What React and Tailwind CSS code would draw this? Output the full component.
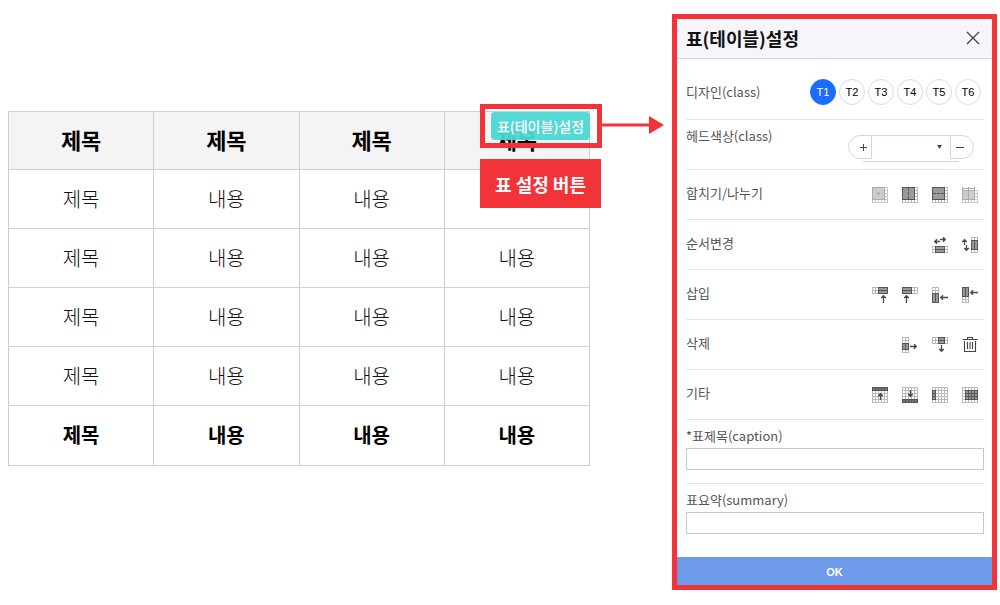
import { useState } from 'react'

const designs = ['T1', 'T2', 'T3', 'T4', 'T5', 'T6']

const rows = [
  ['제목', '내용', '내용', ''],
  ['제목', '내용', '내용', '내용'],
  ['제목', '내용', '내용', '내용'],
  ['제목', '내용', '내용', '내용'],
]

// Cells are 3px apart, lines sit on the pixel grid
function Cells({ x = 0, y = 0, w = 15, h = 15, color = '#b9b9b9' }) {
  let d = ''
  for (let i = x; i <= x + w; i += 3) d += `M${i + 0.5} ${y}v${h + 1}`
  for (let j = y; j <= y + h; j += 3) d += `M${x} ${j + 0.5}h${w + 1}`
  return <path d={d} stroke={color} />
}

function Block({ x = 0, y = 0, w, h, line, fill = '#9a9a9a', stroke = '#555', dash }) {
  return (
    <>
      <rect x={x + 0.5} y={y + 0.5} width={w} height={h} fill={fill} stroke={stroke} />
      {line && <path d={line} stroke={stroke} strokeDasharray={dash} />}
    </>
  )
}

// dir is the way the arrow points, x/y is its tip
function Arrow({ dir, x, y, len = 8 }) {
  const turn = { up: 0, right: 90, down: 180, left: 270 }[dir]
  return (
    <path
      transform={`translate(${x + 0.5} ${y + 0.5}) rotate(${turn})`}
      d={`M0 0V${len - 0.5}M-2.3 2.5L0 0.2L2.3 2.5M-1 1.8h2`}
      stroke="#4a4a4a"
      strokeWidth="1.3"
      shapeRendering="auto"
    />
  )
}

const icons = {
  merge: (
    <>
      <Cells color="#c9c9c9" />
      <Block w={12} h={12} fill="#ccc" stroke="#aaa" line="M5 6.5h3M6.5 5v3" />
    </>
  ),
  splitCol: (
    <>
      <Cells />
      <Block w={12} h={12} line="M6.5 1v12" dash="3 1" />
    </>
  ),
  splitRow: (
    <>
      <Cells />
      <Block w={12} h={12} line="M1 6.5h12" dash="3 1" />
    </>
  ),
  splitAll: (
    <>
      <Cells y={3} h={12} color="#c9c9c9" />
      <Block y={3} w={12} h={9} fill="#ccc" stroke="#aaa" line="M6.5 0v12M0.5 0v3M12.5 0v3M0 1.5h13" />
    </>
  ),
  moveRow: (
    <>
      <Cells y={9} h={6} />
      <Block x={3} y={9} w={9} h={6} line="M3 12.5h10" />
      <Arrow dir="right" x={13} y={2} len={6} />
      <Arrow dir="left" x={2} y={4} len={6} />
    </>
  ),
  moveCol: (
    <>
      <Cells x={9} w={6} />
      <Block x={9} y={3} w={6} h={9} line="M12.5 3v10" />
      <Arrow dir="up" x={2} y={2} len={6} />
      <Arrow dir="down" x={4} y={13} len={6} />
    </>
  ),
  insertLeft: (
    <>
      <Cells h={6} />
      <Block x={6} w={9} h={6} line="M6 3.5h10" />
      <Arrow dir="up" x={11} y={8} />
    </>
  ),
  insertRight: (
    <>
      <Cells h={6} />
      <Block w={9} h={6} line="M0 3.5h10" />
      <Arrow dir="up" x={4} y={8} />
    </>
  ),
  insertAbove: (
    <>
      <Cells w={6} />
      <Block y={6} w={6} h={9} line="M3.5 6v10" />
      <Arrow dir="left" x={8} y={10} />
    </>
  ),
  insertBelow: (
    <>
      <Cells w={6} />
      <Block w={6} h={9} line="M3.5 0v10" />
      <Arrow dir="left" x={8} y={5} />
    </>
  ),
  deleteRow: (
    <>
      <Cells w={6} />
      <Block y={6} w={6} h={6} line="M3.5 6v7" />
      <Arrow dir="right" x={14} y={9} len={7} />
    </>
  ),
  deleteCol: (
    <>
      <Cells h={6} />
      <Block x={6} w={6} h={6} line="M6 3.5h7" />
      <Arrow dir="down" x={9} y={14} len={7} />
    </>
  ),
  trash: (
    <path
      d="M0.5 2.5h15M5.5 2V0.5h5V2M2.5 4v10.5h11V4M5.5 5v7M8 5v7M10.5 5v7"
      stroke="#444"
      strokeWidth="1.1"
      shapeRendering="auto"
    />
  ),
  headTop: (
    <>
      <Cells />
      <Block w={15} h={3} fill="#777" line="M3.5 0v4M6.5 0v4M9.5 0v4M12.5 0v4" />
      <Arrow dir="up" x={8} y={6} len={7} />
    </>
  ),
  headBottom: (
    <>
      <Cells />
      <Block y={12} w={15} h={3} fill="#777" line="M3.5 12v4M6.5 12v4M9.5 12v4M12.5 12v4" />
      <Arrow dir="down" x={8} y={9} len={7} />
    </>
  ),
  headLeft: (
    <>
      <Cells />
      <Block y={3} w={3} h={9} line="M0 6.5h4M0 9.5h4" />
    </>
  ),
  bodyCells: (
    <>
      <Cells />
      <Block x={3} y={3} w={12} h={9} line="M6.5 3v10M9.5 3v10M12.5 3v10M3 6.5h13M3 9.5h13" />
    </>
  ),
}

const tools = [
  { label: '합치기/나누기', items: ['merge', 'splitCol', 'splitRow', 'splitAll'] },
  { label: '순서변경', items: ['moveRow', 'moveCol'] },
  { label: '삽입', items: ['insertLeft', 'insertRight', 'insertAbove', 'insertBelow'] },
  { label: '삭제', items: ['deleteRow', 'deleteCol', 'trash'] },
  { label: '기타', items: ['headTop', 'headBottom', 'headLeft', 'bodyCells'] },
]

function ToolIcon({ name }) {
  return (
    <button type="button" className="block h-4 w-4">
      <svg viewBox="0 0 16 16" className="h-4 w-4" fill="none" shapeRendering="crispEdges">
        {icons[name]}
      </svg>
    </button>
  )
}

function TextField({ id, label }) {
  return (
    <div className="h-16 border-b border-[#dbe6ee] pt-2 last:border-b-0">
      <label htmlFor={id} className="block h-5 leading-4">{label}</label>
      <input id={id} type="text" className="block h-[22px] w-full border border-[#c8c8c8] bg-white px-2 outline-none" />
    </div>
  )
}

function ContentTable() {
  return (
    <table className="w-full table-fixed border-collapse text-center text-xl text-[#111]">
      <thead>
        <tr className="h-[58px] bg-[#f4f4f4] text-[22px] text-black">
          {[0, 1, 2, 3].map((i) => (
            <th key={i} className="border border-[#cfcfcf] pb-1 font-bold leading-7">제목</th>
          ))}
        </tr>
      </thead>
      <tbody>
        {rows.map((row, r) => (
          <tr key={r} className="h-[59px]">
            {row.map((cell, c) => (
              <td key={c} className="border border-[#cfcfcf] font-light leading-7">{cell}</td>
            ))}
          </tr>
        ))}
      </tbody>
      <tfoot>
        <tr className="h-[60px] text-black">
          {['제목', '내용', '내용', '내용'].map((cell, c) => (
            <td key={c} className="border border-[#cfcfcf] pb-0.5 font-bold leading-7">{cell}</td>
          ))}
        </tr>
      </tfoot>
    </table>
  )
}

function SettingsPanel() {
  const [design, setDesign] = useState('T1')

  return (
    <section className="w-[325px] shrink-0 border-5 border-[#f23338] bg-white text-[13px] text-[#555]">
      {/* Title bar */}
      <header className="flex h-10 items-center justify-between border-b border-[#cbd8e0] bg-[#f5f5fb] pr-3 pb-0.5 pl-[9px]">
        <h2 className="text-lg font-bold leading-6 text-[#111]">표(테이블)설정</h2>
        <button type="button" aria-label="닫기" className="block">
          <svg viewBox="0 0 14 14" className="h-3.5 w-3.5" fill="none" stroke="#444" strokeWidth="1.3">
            <path d="M1 1l12 12M13 1L1 13" />
          </svg>
        </button>
      </header>

      <div className="pt-[11px] pr-2 pb-[9px] pl-[9px]">
        <div className="flex h-[50px] items-center justify-between border-b border-[#dbe6ee] pr-[3px] pb-[5px]">
          <span>디자인(class)</span>
          <div className="flex gap-[3px] font-['Liberation_Sans',sans-serif] text-[11px]">
            {designs.map((d) => (
              <button
                key={d}
                type="button"
                onClick={() => setDesign(d)}
                className={`h-[26px] w-[26px] rounded-full border ${
                  d === design ? 'border-[#1a6dff] bg-[#1a6dff] text-white' : 'border-[#d3dde8] bg-white text-black'
                }`}
              >
                {d}
              </button>
            ))}
          </div>
        </div>

        <div className="flex h-[50px] items-start justify-between border-b border-[#dbe6ee] pr-2.5">
          <label htmlFor="head-color" className="pt-2 leading-4">헤드색상(class)</label>
          <div className="flex flex-col items-center pt-[15px]">
            <div className="flex h-6">
              <button type="button" className="flex w-6 items-center justify-center rounded-l-full border border-[#cbd8e6] pl-1.5">
                <svg viewBox="0 0 7 7" className="h-[7px] w-[7px]" stroke="#444" shapeRendering="crispEdges">
                  <path d="M0 3.5h7M3.5 0v7" />
                </svg>
              </button>
              <div className="relative">
                <select id="head-color" className="block h-6 w-[78px] appearance-none bg-white border-t border-[#cbd8e6] outline-none">
                  <option></option>
                </select>
                <svg viewBox="0 0 5 4" className="pointer-events-none absolute top-2.5 right-2 h-1 w-[5px]" fill="#444">
                  <path d="M0 0h5L2.5 4z" />
                </svg>
              </div>
              <button type="button" className="flex w-6 items-center justify-center rounded-r-full border border-[#cbd8e6] pr-1">
                <svg viewBox="0 0 8 8" className="h-2 w-2" stroke="#444" shapeRendering="crispEdges">
                  <path d="M0 4.5h8" />
                </svg>
              </button>
            </div>
            <div className="mt-0.5 h-px w-24 bg-[#cbd8e6]" />
          </div>
        </div>

        {tools.map((tool) => (
          <div key={tool.label} className="flex h-[50px] items-center justify-between border-b border-[#dbe6ee] pr-1.5">
            <span className="pb-1 leading-5">{tool.label}</span>
            <div className="flex gap-3.5">
              {tool.items.map((name) => (
                <ToolIcon key={name} name={name} />
              ))}
            </div>
          </div>
        ))}

        <TextField id="caption" label="*표제목(caption)" />
        <TextField id="summary" label="표요약(summary)" />
      </div>

      <button type="button" className="block h-7 w-full bg-[#6d9bea] pt-0.5 font-['Liberation_Sans',sans-serif] text-[11px] font-bold text-white">
        OK
      </button>
    </section>
  )
}

export default function App() {
  return (
    <main className="flex items-start gap-[82px] bg-white pt-3.5 pr-[3px] pb-[15px] pl-2 font-['Noto_Sans_CJK_KR',sans-serif]">
      <div className="relative mt-[97px] min-w-0 flex-1">
        <ContentTable />

        {/* Button over the table corner */}
        <button type="button" className="absolute top-px right-0 h-7 w-[99px] rounded bg-[#4cd7d3]/95 text-sm leading-7 font-medium whitespace-nowrap text-white">
          표(테이블)설정
        </button>
        <div className="pointer-events-none absolute -top-[7px] -right-3 h-11 w-[122px] border-5 border-[#f23338]" />
        <svg viewBox="0 0 62 18" className="absolute top-[5px] left-full ml-3 h-[18px] w-[62px]" fill="#f23338">
          <path d="M0 7.5h47V0L62 9L47 18V10.5H0z" />
        </svg>
        <div className="absolute top-12 -right-[11px] flex h-[49px] w-[121px] items-center justify-center bg-[#f23338] text-lg font-bold text-white">
          표 설정 버튼
        </div>
      </div>

      <SettingsPanel />
    </main>
  )
}
